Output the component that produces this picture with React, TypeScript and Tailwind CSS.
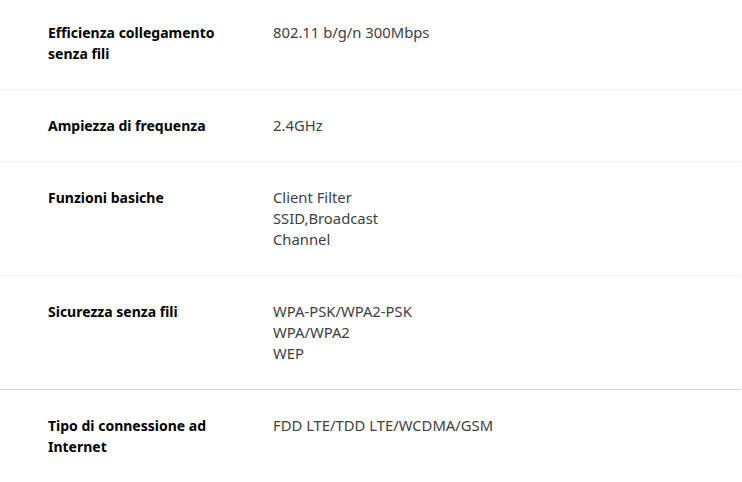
import React from "react";

const rows: { label: string[]; values: string[]; border: string; first?: boolean }[] = [
  { label: ["Efficienza collegamento", "senza fili"], values: ["802.11 b/g/n 300Mbps"], border: "border-[#f0f0f0]", first: true },
  { label: ["Ampiezza di frequenza"], values: ["2.4GHz"], border: "border-[#f0f0f0]" },
  { label: ["Funzioni basiche"], values: ["Client Filter", "SSID,Broadcast", "Channel"], border: "border-[#f0f0f0]" },
  { label: ["Sicurezza senza fili"], values: ["WPA-PSK/WPA2-PSK", "WPA/WPA2", "WEP"], border: "border-[#d9d9d9]" },
  { label: ["Tipo di connessione ad", "Internet"], values: ["FDD LTE/TDD LTE/WCDMA/GSM"], border: "border-transparent" },
];

export default function App() {
  return (
    <div
      className="w-[742px] h-[482px] overflow-hidden bg-white"
      style={{ fontFamily: '"Noto Sans", "Open Sans", sans-serif' }}
    >
      <div className="w-[741px]">
        {rows.map((r, i) => (
          <div
            key={i}
            className={`flex border-b ${r.border} ${r.first ? "pt-[22px]" : "pt-[25px]"} pb-[25px] leading-[21px]`}
          >
            <div className="w-[225px] ml-[48px] font-bold text-black text-[14px]">
              {r.label.map((l, j) => (
                <div key={j}>{l}</div>
              ))}
            </div>
            <div className="text-[#404040] text-[14.8px]">
              {r.values.map((v, j) => (
                <div key={j}>{v}</div>
              ))}
            </div>
          </div>
        ))}
      </div>
    </div>
  );
}
